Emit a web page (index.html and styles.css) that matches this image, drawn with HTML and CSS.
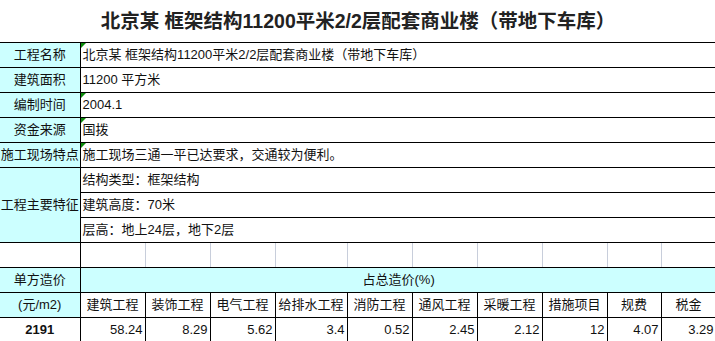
FILE: index.html
```html
<!DOCTYPE html>
<html lang="zh">
<head>
<meta charset="utf-8">
<title>北京某 框架结构11200平米2/2层配套商业楼</title>
<link rel="stylesheet" href="styles.css">
</head>
<body>
<h1 class="title">北京某 框架结构11200平米2/2层配套商业楼（带地下车库）</h1>
<table class="sheet">
  <colgroup>
    <col class="c-label">
    <col class="c65"><col class="c65"><col class="c65"><col class="c72">
    <col class="c65"><col class="c65"><col class="c65"><col class="c65">
    <col class="c54"><col class="c55">
  </colgroup>
  <tr>
    <td class="label">工程名称</td>
    <td class="info mark" colspan="10">北京某 框架结构11200平米2/2层配套商业楼（带地下车库）</td>
  </tr>
  <tr>
    <td class="label">建筑面积</td>
    <td class="info" colspan="10">11200 平方米</td>
  </tr>
  <tr>
    <td class="label">编制时间</td>
    <td class="info mark" colspan="10">2004.1</td>
  </tr>
  <tr>
    <td class="label">资金来源</td>
    <td class="info mark" colspan="10">国拨</td>
  </tr>
  <tr>
    <td class="label">施工现场特点</td>
    <td class="info mark" colspan="10">施工现场三通一平已达要求，交通较为便利。</td>
  </tr>
  <tr>
    <td class="label" rowspan="3">工程主要特征</td>
    <td class="info" colspan="10">结构类型：框架结构</td>
  </tr>
  <tr>
    <td class="info" colspan="10">建筑高度：70米</td>
  </tr>
  <tr>
    <td class="info" colspan="10">层高：地上24层，地下2层</td>
  </tr>
  <tr class="blank">
    <td class="plain"></td>
    <td></td><td></td><td></td><td></td><td></td>
    <td></td><td></td><td></td><td></td><td></td>
  </tr>
  <tr>
    <td class="label">单方造价</td>
    <td class="label share" colspan="10">占总造价(%)</td>
  </tr>
  <tr class="heads">
    <td class="label">(元/m2)</td>
    <td>建筑工程</td><td>装饰工程</td><td>电气工程</td><td>给排水工程</td><td>消防工程</td>
    <td>通风工程</td><td>采暖工程</td><td>措施项目</td><td>规费</td><td>税金</td>
  </tr>
  <tr class="values">
    <td class="total">2191</td>
    <td>58.24</td><td>8.29</td><td>5.62</td><td>3.4</td><td>0.52</td>
    <td>2.45</td><td>2.12</td><td>12</td><td>4.07</td><td>3.29</td>
  </tr>
</table>
</body>
</html>
```

FILE: styles.css
```css
html, body {
  margin: 0;
  padding: 0;
  background: #ffffff;
  overflow: hidden;
}

body {
  width: 715px;
  height: 341px;
  font-family: "Liberation Sans", "Noto Sans CJK SC", sans-serif;
  color: #111;
}

.title {
  margin: 0;
  height: 42px;
  line-height: 42px;
  width: 716px;
  text-align: center;
  font-size: 19.5px;
  font-weight: bold;
  color: #222;
}

.sheet {
  border-collapse: collapse;
  table-layout: fixed;
  width: 716px;
  font-size: 13px;
}

.c-label { width: 80px; }
.c65 { width: 65px; }
.c72 { width: 72px; }
.c54 { width: 54px; }
.c55 { width: 55px; }

.sheet tr {
  height: 25px;
}

.sheet td {
  border: 1px solid #000;
  padding: 0 2px;
  white-space: nowrap;
  overflow: hidden;
  vertical-align: middle;
  line-height: 16px;
}

.sheet tr td:first-child {
  border-left: none;
}

.label {
  background: #ccffff;
  text-align: center;
}

.sheet td.label {
  padding: 0;
}

.info {
  position: relative;
  text-align: left;
}

.mark::before {
  content: "";
  position: absolute;
  left: 0;
  top: 0;
  border-top: 5px solid #0a8a0a;
  border-right: 5px solid transparent;
}

.blank td {
  border-left-color: #c8cedb;
  border-right-color: #c8cedb;
}

.blank td.plain {
  border-right-color: #000;
}

.blank td:nth-child(2) {
  border-left-color: #000;
}

.sheet td.share {
  text-align: left;
  padding-left: 282px;
}

.heads td {
  text-align: center;
  padding: 0;
}

.values td {
  text-align: right;
  padding: 0 2px 0 0;
}

.values td.total {
  text-align: center;
  font-weight: bold;
  padding: 0;
}
```
